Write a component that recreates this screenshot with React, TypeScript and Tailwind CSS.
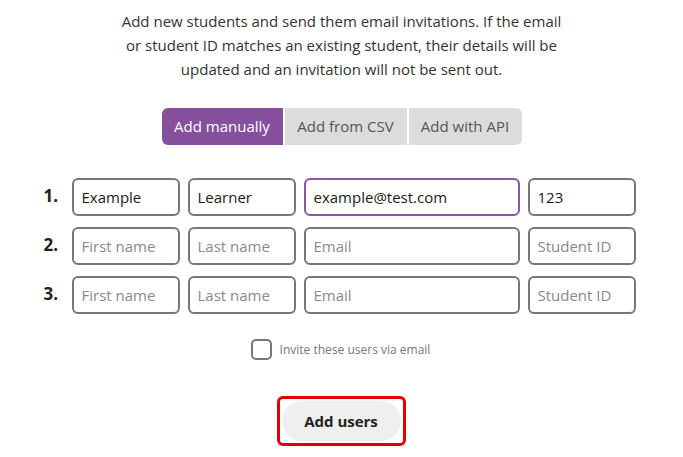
import React from "react";

const font = { fontFamily: '"Open Sans", "Noto Sans", sans-serif' };

function Field({ value, placeholder, w, active }: { value?: string; placeholder: string; w: string; active?: boolean }) {
  return (
    <div
      className={`${w} h-[38px] rounded-[6px] border-2 ${active ? "border-[#8a55a6]" : "border-[#777777]"} flex items-center px-[8px] text-[15px] ${value ? "text-[#1a1a1a]" : "text-[#8a8a8a]"}`}
    >
      {value ?? placeholder}
    </div>
  );
}

function Row({ n, vals }: { n: number; vals?: string[] }) {
  return (
    <div className="flex items-center gap-[8px]">
      <div className="w-[20px] text-[17px] font-bold text-[#222] -mt-[2px]">{n}.</div>
      <Field w="w-[108px]" placeholder="First name" value={vals?.[0]} />
      <Field w="w-[108px]" placeholder="Last name" value={vals?.[1]} />
      <Field w="w-[216px]" placeholder="Email" value={vals?.[2]} active={!!vals} />
      <Field w="w-[108px]" placeholder="Student ID" value={vals?.[3]} />
    </div>
  );
}

export default function App() {
  return (
    <div className="w-[683px] h-[457px] bg-white flex flex-col items-center" style={font}>
      <p className="mt-[9px] text-[15px] leading-[24px] text-[#333] text-center w-[448px]">
        Add new students and send them email invitations. If the email or student ID matches an existing student, their details will be updated and an invitation will not be sent out.
      </p>
      <div className="mt-[27px] flex gap-[2px] rounded-[6px] overflow-hidden text-[15px]">
        <div className="w-[121px] h-[37px] flex items-center justify-center bg-[#86509c] text-white">Add manually</div>
        <div className="w-[122px] h-[37px] flex items-center justify-center bg-[#dcdcdc] text-[#555]">Add from CSV</div>
        <div className="w-[113px] h-[37px] flex items-center justify-center bg-[#dcdcdc] text-[#555]">Add with API</div>
      </div>
      <div className="mt-[33px] flex flex-col gap-[11px] ml-[-4px]">
        <Row n={1} vals={["Example", "Learner", "example@test.com", "123"]} />
        <Row n={2} />
        <Row n={3} />
      </div>
      <div className="mt-[25px] flex items-center gap-[8px] ml-[-2px]">
        <div className="w-[21px] h-[21px] rounded-[5px] border-2 border-[#777]" />
        <span className="text-[12px] text-[#777]">Invite these users via email</span>
      </div>
      <div className="mt-[36px] ml-[-1px] rounded-[6px] border-[3px] border-[#e00000] p-[2px]">
        <div className="w-[119px] h-[40px] rounded-full bg-[#efefef] flex items-center justify-center text-[15px] font-bold text-[#222]">
          Add users
        </div>
      </div>
    </div>
  );
}
